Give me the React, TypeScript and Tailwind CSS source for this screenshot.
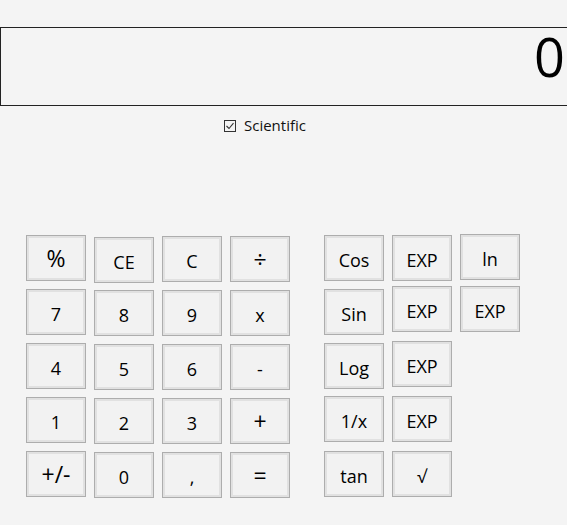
import React from "react";

const font = { fontFamily: '"Open Sans", "Noto Sans", sans-serif' };

function Btn({ label, mt, big }: { label: string; mt: string; big?: boolean }) {
  return (
    <div
      className={`${mt} ${big ? "text-[23px] pt-[1px]" : "text-[18px] pt-[3px]"} w-[60px] h-[46px] shrink-0 flex items-center justify-center border border-[#adadad] bg-[#f2f2f2] shadow-[inset_0_0_0_2px_#e1e1e1] text-black leading-none`}
    >
      {label}
    </div>
  );
}

export default function App() {
  return (
    <div className="w-[567px] h-[525px] bg-[#f4f4f4] overflow-hidden" style={font}>
      <div className="pt-[27px]">
        <div className="w-[580px] h-[79px] border border-[#222] flex items-start justify-end pr-[17px] pt-[1px]">
          <span className="text-[54px] leading-[54px] text-black mr-[-3px]">0</span>
        </div>
      </div>
      <div className="flex items-center pl-[224px] mt-[12px] h-[15px]">
        <div className="w-[12px] h-[12px] border border-[#333] flex items-center justify-center bg-[#f4f4f4]">
          <svg width="10" height="10" viewBox="0 0 10 10">
            <path d="M1.5 5 L4 7.5 L8.5 2.2" fill="none" stroke="#333" strokeWidth="1.1" />
          </svg>
        </div>
        <span className="ml-[8px] text-[15px] leading-none text-[#111]">Scientific</span>
      </div>
      <div className="flex pl-[26px]">
        <div className="flex gap-[8px]">
          <div className="flex flex-col">
            <Btn label="%" mt="mt-[102px]" big />
            <Btn label="7" mt="mt-[8px]" />
            <Btn label="4" mt="mt-[8px]" />
            <Btn label="1" mt="mt-[8px]" />
            <Btn label="+/-" mt="mt-[8px]" big />
          </div>
          <div className="flex flex-col">
            <Btn label="CE" mt="mt-[104px]" />
            <Btn label="8" mt="mt-[7px]" />
            <Btn label="5" mt="mt-[8px]" />
            <Btn label="2" mt="mt-[8px]" />
            <Btn label="0" mt="mt-[8px]" />
          </div>
          <div className="flex flex-col">
            <Btn label="C" mt="mt-[103px]" />
            <Btn label="9" mt="mt-[8px]" />
            <Btn label="6" mt="mt-[8px]" />
            <Btn label="3" mt="mt-[8px]" />
            <Btn label="," mt="mt-[8px]" />
          </div>
          <div className="flex flex-col">
            <Btn label="÷" mt="mt-[103px]" big />
            <Btn label="x" mt="mt-[8px]" />
            <Btn label="-" mt="mt-[8px]" />
            <Btn label="+" mt="mt-[8px]" big />
            <Btn label="=" mt="mt-[8px]" big />
          </div>
        </div>
        <div className="flex gap-[8px] ml-[34px]">
          <div className="flex flex-col">
            <Btn label="Cos" mt="mt-[102px]" />
            <Btn label="Sin" mt="mt-[8px]" />
            <Btn label="Log" mt="mt-[8px]" />
            <Btn label="1/x" mt="mt-[7px]" />
            <Btn label="tan" mt="mt-[9px]" />
          </div>
          <div className="flex flex-col">
            <Btn label="EXP" mt="mt-[102px]" />
            <Btn label="EXP" mt="mt-[5px]" />
            <Btn label="EXP" mt="mt-[9px]" />
            <Btn label="EXP" mt="mt-[9px]" />
            <Btn label="√" mt="mt-[9px]" />
          </div>
          <div className="flex flex-col">
            <Btn label="ln" mt="mt-[101px]" />
            <Btn label="EXP" mt="mt-[6px]" />
          </div>
        </div>
      </div>
    </div>
  );
}
